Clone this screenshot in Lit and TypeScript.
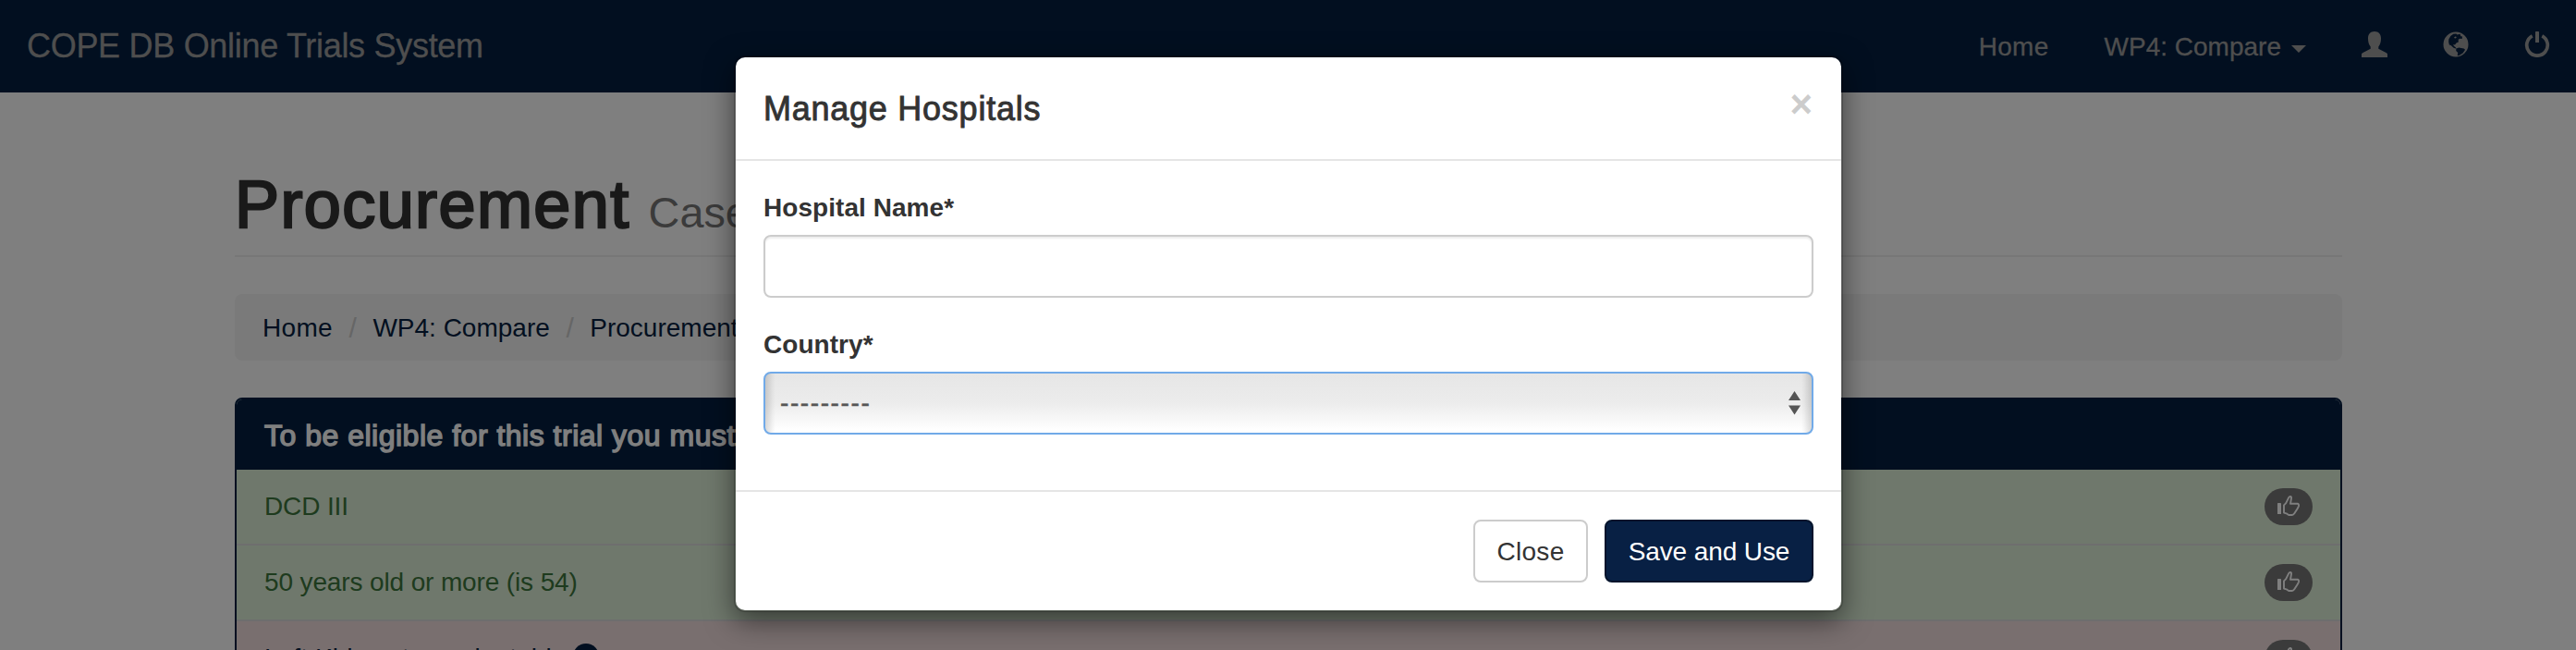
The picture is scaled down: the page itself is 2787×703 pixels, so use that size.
import { LitElement, html, css } from "lit";
import { customElement } from "lit/decorators.js";

const userIcon = html`<svg class="icon" viewBox="0 0 28 28">
  <path d="M14 0c4.2 0 7 2.700 7 7.400 0 4-1 7-2.700 9.100v2.300l8.200 4.200c1 .5 1.500 1 1.500 2V28H0v-3c0-1 .5-1.500 1.500-2l8.200-4.200v-2.300C8 14.400 7 11.400 7 7.400 7 2.700 9.800 0 14 0z" fill="currentColor" />
</svg>`;

const globeIcon = html`<svg class="icon" viewBox="0 0 28 28">
  <path fill="currentColor" fill-rule="evenodd"
    d="M14 .5a13.500 13.500 0 1 1 0 27a13.500 13.500 0 1 1 0-27z
       M6.300 8.500l2-3.600 3-2.100 3-.3 1.200.9 3-.7.9 2.600 1.600.3-.3 2.400-2.400-.3-1.600 1 .1 2.700-2.300 1-1.500 2-1.800-.4.700 1.800 1.900 1.400.8 1.600-3-1.100-3-2.600-1.700-.6-.7-3z
       M13.200 5.400l-1.300 1.500 2 .5 1-1.300z
       M14.400 18.600l2.900-1 5.300.8 1.500 1.300-2.600 3.900-4.500 2.700-1.300-.4.500-3-2-1.900z" />
</svg>`;

const powerIcon = html`<svg class="icon" viewBox="0 0 28 28">
  <path d="M8.700 4.900a11.300 11.300 0 1 0 10.600 0" fill="none" stroke="currentColor" stroke-width="3.700" />
  <rect x="12" y="0" width="4" height="12" rx=".6" fill="currentColor" />
</svg>`;

const thumbIcon = html`<svg class="thumb" viewBox="0 0 24 22">
  <rect x="0" y="8" width="4" height="12" rx=".6" fill="currentColor" />
  <path d="M7 10.400L9.200 8.200 12.200 2.200Q12.800 1 14 1 15.200 1 15 2.800L14 8.800 21.600 8.800Q23.400 9 23 11.200 22.600 12.800 18.300 19.200 17.200 20.900 15.800 21L12.200 21 9.600 19.300 7 18.600z"
    fill="none" stroke="currentColor" stroke-width="1.900" stroke-linejoin="round" />
</svg>`;

@customElement("nav-bar")
class NavBar extends LitElement {
  static styles = css`
    :host { display: block; }
    .bar {
      display: flex; align-items: center; justify-content: space-between;
      height: 100px; padding: 0 28px; box-sizing: border-box;
      background: #051f41; color: #9d9d9d; line-height: 40px;
      -webkit-text-stroke: 0.3px #9d9d9d;
    }
    .brand { font-size: 36px; letter-spacing: -0.3px; padding-left: 1px; }
    .links { display: flex; align-items: center; gap: 60px; }
    .home { letter-spacing: 0.3px; }
    .menu { display: flex; align-items: center; gap: 11px; padding-top: 1px; margin-top: 1px; }
    .home { padding-top: 1px; margin-top: 1px; }
    .caret {
      border-top: 8px solid currentColor;
      border-left: 8px solid transparent; border-right: 8px solid transparent;
      margin-top: 3px;
    }
    .icon { display: block; width: 28px; height: 28px; margin-top: -4px; }
  `;
  render() {
    return html`<nav class="bar">
      <span class="brand">COPE DB Online Trials System</span>
      <div class="links">
        <span class="home">Home</span>
        <span class="menu">WP4: Compare<span class="caret"></span></span>
        ${userIcon}${globeIcon}${powerIcon}
      </div>
    </nav>`;
  }
}

@customElement("eligibility-panel")
class EligibilityPanel extends LitElement {
  static styles = css`
    :host { display: block; }
    .panel { border: 2px solid #051f41; border-radius: 8px; overflow: hidden; }
    .heading {
      display: flex; align-items: center; height: 76px; padding: 2px 30px 0;
      box-sizing: border-box; background: #051f41; color: #fff;
      font-size: 32px; letter-spacing: 0.5px; -webkit-text-stroke: 1.4px #fff;
    }
    .row {
      display: flex; align-items: center; justify-content: space-between;
      height: 80px; padding: 0 30px; border-bottom: 2px solid #ddd;
    }
    .ok { background: #dff0d8; color: #3c763d; letter-spacing: -0.13px; }
    .bad { background: #f2dede; color: #051f41; }
    .label { display: flex; align-items: center; gap: 8px; }
    .wide { letter-spacing: 0.1px; }
    .badge {
      display: flex; align-items: center; justify-content: center;
      width: 52px; height: 40px; border-radius: 20px;
      background: #777; color: #fff; padding-bottom: 2px; box-sizing: border-box;
    }
    .thumb { display: block; width: 24px; height: 22px; }
    .help {
      display: flex; align-items: center; justify-content: center;
      width: 28px; height: 28px; border-radius: 50%; background: #051f41;
      color: #f2dede; font-size: 18px; font-weight: bold; margin-top: -4px;
    }
  `;
  render() {
    const badge = html`<span class="badge">${thumbIcon}</span>`;
    return html`<section class="panel">
      <div class="heading">To be eligible for this trial you must</div>
      <div class="row ok"><span>DCD III</span>${badge}</div>
      <div class="row ok"><span>50 years old or more (is 54)</span>${badge}</div>
      <div class="row bad">
        <span class="label"><span class="wide">Left Kidney transplantable</span><span class="help">?</span></span>
        ${badge}
      </div>
    </section>`;
  }
}

@customElement("hospital-dialog")
class HospitalDialog extends LitElement {
  static styles = css`
    :host { display: block; }
    .dialog {
      width: 1200px; box-sizing: border-box; background: #fff; background-clip: padding-box;
      border: 2px solid rgba(0, 0, 0, 0.2); border-radius: 12px;
      box-shadow: 0 10px 30px rgba(0, 0, 0, 0.5); color: #333;
    }
    .head {
      display: flex; justify-content: space-between; height: 112px; box-sizing: border-box;
      padding: 30px; border-bottom: 2px solid #e5e5e5;
    }
    .title {
      margin: 0; font-size: 36px; font-weight: 400; line-height: 51px;
      letter-spacing: 0.75px; -webkit-text-stroke: 0.9px #333;
    }
    .x {
      font-size: 42px; font-weight: bold; line-height: 42px; color: #ccc;
      padding-right: 1px;
    }
    .body { padding: 30px; height: 356px; box-sizing: border-box; }
    .group { margin-bottom: 30px; }
    .label {
      display: block; height: 40px; line-height: 42px; margin-bottom: 10px;
      font-weight: bold; letter-spacing: 0.05px;
    }
    .control {
      display: block; width: 100%; height: 68px; box-sizing: border-box; margin: 0;
      border: 2px solid #ccc; border-radius: 8px; outline: none; padding: 0 16px;
      font: inherit; color: #555; background: #fff;
      box-shadow: inset 0 2px 2px rgba(0, 0, 0, 0.075);
    }
    .picker { display: grid; }
    .picker > * { grid-area: 1 / 1; }
    .choice {
      appearance: none; border-color: #71aae8; letter-spacing: 1.6px; box-shadow: none;
      padding-bottom: 2px; -webkit-text-stroke: 0.5px #555;
      background:
        linear-gradient(to right, rgba(0, 0, 0, 0.15), rgba(0, 0, 0, 0.03) 8px, transparent 11px),
        linear-gradient(to left, rgba(0, 0, 0, 0.15), rgba(0, 0, 0, 0.03) 8px, transparent 11px),
        linear-gradient(#e6e6e6, #ececec 50%, #fff 96%);
    }
    .arrows {
      width: 13px; height: 26px; justify-self: end; align-self: center;
      margin-right: 14px; color: #555;
    }
    .foot {
      display: flex; justify-content: flex-end; gap: 18px;
      padding: 30px; border-top: 2px solid #e5e5e5;
    }
    .btn {
      width: 124px; height: 68px; box-sizing: border-box; padding: 2px 0 0; font: inherit;
      color: #333; background: #fff; border: 2px solid #ccc; border-radius: 8px;
      letter-spacing: 0.3px;
    }
    .primary {
      width: 226px; color: #fff; background: #082044; border-color: #04142c; letter-spacing: -0.1px;
    }
  `;
  render() {
    return html`<div class="dialog" role="dialog">
      <div class="head">
        <h4 class="title">Manage Hospitals</h4>
        <span class="x">×</span>
      </div>
      <div class="body">
        <div class="group">
          <label class="label">Hospital Name*</label>
          <input class="control" type="text" />
        </div>
        <div class="group">
          <label class="label">Country*</label>
          <div class="picker">
            <select class="control choice"><option>---------</option></select>
            <svg class="arrows" viewBox="0 0 13 26">
              <path d="M6.500 0L13 10H0zM0 15.500H13L6.500 25.500z" fill="currentColor" />
            </svg>
          </div>
        </div>
      </div>
      <div class="foot">
        <button class="btn">Close</button>
        <button class="btn primary">Save and Use</button>
      </div>
    </div>`;
  }
}

@customElement("app-root")
class AppRoot extends LitElement {
  static styles = css`
    :host {
      display: block; position: relative; height: 703px; overflow: hidden; background: #fff;
      font-family: "Liberation Sans", Arial, sans-serif; font-size: 28px; color: #333;
    }
    .container { width: 2280px; margin: 0 253px 0 254px; padding-top: 82px; }
    .page-header { height: 96px; box-sizing: border-box; border-bottom: 2px solid #eee; margin-bottom: 40px; }
    .h1 { margin: 0; font-size: 72px; font-weight: 400; line-height: 79px; white-space: nowrap; }
    .main { letter-spacing: 1.4px; -webkit-text-stroke: 2.4px #333; }
    .small { font-size: 46.8px; color: #777; }
    .crumbs {
      display: flex; align-items: center; height: 72px; padding: 1px 30px 0; box-sizing: border-box;
      background: #f5f5f5; border-radius: 8px; margin-bottom: 40px; color: #051f41;
    }
    .first { letter-spacing: 0.3px; }
    .sep { width: 43.500px; text-align: center; color: #ccc; font-size: 30px; }
    .backdrop {
      position: absolute; inset: 0; background: rgba(0, 0, 0, 0.5);
      display: flex; justify-content: center; align-items: flex-start; padding: 60px 0 0 1px;
    }
  `;
  render() {
    return html`
      <nav-bar></nav-bar>
      <main class="container">
        <div class="page-header">
          <h1 class="h1"><span class="main">Procurement</span> <span class="small">Case</span></h1>
        </div>
        <div class="crumbs">
          <span class="first">Home</span><span class="sep">/</span><span>WP4: Compare</span><span class="sep">/</span><span>Procurement</span>
        </div>
        <eligibility-panel></eligibility-panel>
      </main>
      <div class="backdrop"><hospital-dialog></hospital-dialog></div>
    `;
  }
}
